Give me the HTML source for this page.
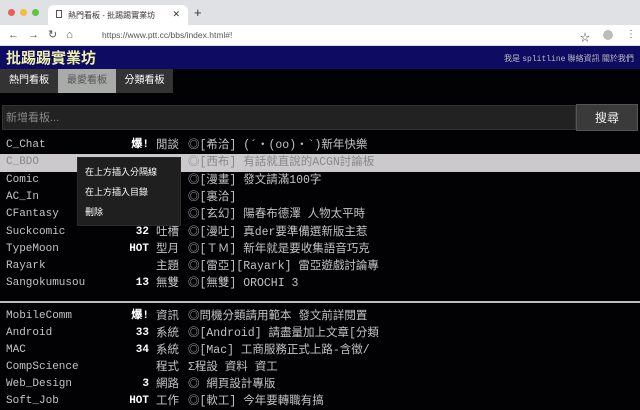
<!DOCTYPE html>
<html><head><meta charset="utf-8"><style>
*{margin:0;padding:0;box-sizing:border-box}
body{width:640px;height:400px;overflow:hidden;background:#020103;font-family:"Liberation Sans","Noto Sans CJK TC",sans-serif;position:relative}
.abs{position:absolute}
.tabbar{left:0;top:0;width:640px;height:25px;background:#dfe1e5}
.tab{left:48px;top:5px;width:140px;height:20px;background:#fff;border-radius:6px 6px 0 0;font-size:8px;color:#333;padding:5px 0 0 20px}
.addr{left:0;top:25px;width:640px;height:21px;background:#fff;border-bottom:1px solid #ddd}
.hdr{left:0;top:46px;width:640px;height:23px;background:#0d0b62}
.row{position:absolute;left:0;width:640px;height:17px;font-size:11px;line-height:17px;color:#c4c4c4}
.n{position:absolute;left:6px;font-family:"Liberation Mono","Noto Sans CJK TC",monospace;font-size:11px}
.c{position:absolute;right:491px;color:#fff;font-weight:bold;font-family:"Liberation Mono",monospace}
.k{position:absolute;left:156px;font-size:11.5px}
.t{position:absolute;left:188px;white-space:nowrap;font-family:"Liberation Mono","Noto Sans CJK TC",monospace;font-size:11.5px}
.menu div{position:absolute;left:7px;font-size:9px;color:#fff}
</style></head><body>
<div class="abs tabbar"></div>
<div class="abs" style="left:8px;top:9px;width:7px;height:7px;border-radius:50%;background:#ee5c55"></div>
<div class="abs" style="left:20px;top:9px;width:7px;height:7px;border-radius:50%;background:#f4bd3a"></div>
<div class="abs" style="left:32px;top:9px;width:7px;height:7px;border-radius:50%;background:#5bc545"></div>
<div class="abs tab">熱門看板 - 批踢踢實業坊<span style="position:absolute;right:8px;top:4px;font-size:9px">✕</span></div>
<div class="abs" style="left:56px;top:10px;width:6px;height:8px;border:1px solid #555"></div>
<div class="abs" style="left:194px;top:5px;font-size:13px;color:#333">+</div>
<div class="abs addr"></div>
<div class="abs" style="left:8px;top:28px;font-size:11px;color:#555;letter-spacing:9px">←→↻⌂</div>
<div class="abs" style="left:102px;top:30px;font-size:8.5px;color:#555">https://www.ptt.cc/bbs/index.html#!</div>
<div class="abs" style="left:580px;top:29px;font-size:10px;color:#444">☆</div>
<div class="abs" style="left:603px;top:30px;width:10px;height:10px;border-radius:50%;background:#bbb"></div>
<div class="abs" style="left:626px;top:29px;font-size:10px;color:#555">⋮</div>
<div class="abs hdr"></div>
<div class="abs" style="left:6px;top:47px;font-size:15px;font-weight:bold;color:#f0f0a8">批踢踢實業坊</div>
<div class="abs" style="left:504px;top:53px;font-size:8px;color:#bbb">我是 <span style="font-family:'Liberation Mono',monospace">splitline</span> 聯絡資訊 關於我們</div>
<div class="abs" style="left:0;top:69px;width:58px;height:24px;background:#333;color:#fff;font-size:10px;line-height:24px;text-align:center">熱門看板</div>
<div class="abs" style="left:58px;top:69px;width:58px;height:24px;background:#a9aba8;color:#555;font-size:10px;line-height:24px;text-align:center">最愛看板</div>
<div class="abs" style="left:116px;top:69px;width:57px;height:24px;background:#333;color:#fff;font-size:10px;line-height:24px;text-align:center">分類看板</div>
<div class="abs" style="left:2px;top:105px;width:574px;height:25px;background:#222;border:1px solid #333;color:#888;font-size:11px;line-height:24px;padding-left:3px">新增看板...</div>
<div class="abs" style="left:576px;top:104px;width:62px;height:27px;background:#3a3a3a;border:1px solid #555;color:#eee;font-size:12px;line-height:26px;text-align:center">搜尋</div>

<div class="row" style="top:137px"><span class="n">C_Chat</span><span class="c">爆!</span><span class="k">閒談</span><span class="t">◎[希洽] (´・(oo)・`)新年快樂</span></div>
<div class="row" style="top:154px;height:18px;background:#cbc9cc;color:#888"><span class="n">C_BDO</span><span class="t">◎[西布] 有話就直說的ACGN討論板</span></div>
<div class="row" style="top:172px"><span class="n">Comic</span><span class="t">◎[漫畫] 發文請滿100字</span></div>
<div class="row" style="top:189px"><span class="n">AC_In</span><span class="t">◎[裏洽]</span></div>
<div class="row" style="top:206px"><span class="n">CFantasy</span><span class="t">◎[玄幻] 陽春布德澤 人物太平時</span></div>
<div class="row" style="top:224px"><span class="n">Suckcomic</span><span class="c">32</span><span class="k">吐槽</span><span class="t">◎[漫吐] 真der要準備選新版主惹</span></div>
<div class="row" style="top:241px"><span class="n">TypeMoon</span><span class="c">HOT</span><span class="k">型月</span><span class="t">◎[ＴＭ] 新年就是要收集語音巧克</span></div>
<div class="row" style="top:258px"><span class="n">Rayark</span><span class="k">主題</span><span class="t">◎[雷亞][Rayark] 雷亞遊戲討論專</span></div>
<div class="row" style="top:275px"><span class="n">Sangokumusou</span><span class="c">13</span><span class="k">無雙</span><span class="t">◎[無雙] OROCHI 3</span></div>
<div class="abs" style="left:0;top:301px;width:640px;height:2px;background:#bbb"></div>
<div class="row" style="top:308px"><span class="n">MobileComm</span><span class="c">爆!</span><span class="k">資訊</span><span class="t">◎問機分類請用範本 發文前詳閱置</span></div>
<div class="row" style="top:325px"><span class="n">Android</span><span class="c">33</span><span class="k">系統</span><span class="t">◎[Android] 請盡量加上文章[分類</span></div>
<div class="row" style="top:342px"><span class="n">MAC</span><span class="c">34</span><span class="k">系統</span><span class="t">◎[Mac] 工商服務正式上路-含徵/</span></div>
<div class="row" style="top:359px"><span class="n">CompScience</span><span class="k">程式</span><span class="t">Σ程設 資料 資工</span></div>
<div class="row" style="top:376px"><span class="n">Web_Design</span><span class="c">3</span><span class="k">網路</span><span class="t">◎ 網頁設計專版</span></div>
<div class="row" style="top:393px"><span class="n">Soft_Job</span><span class="c">HOT</span><span class="k">工作</span><span class="t">◎[軟工] 今年要轉職有搞</span></div>

<div class="abs menu" style="left:77px;top:157px;width:104px;height:69px;background:#1f1f1f;border:1px solid #2a2a2a">
<div style="top:7px">在上方插入分隔線</div>
<div style="top:27px">在上方插入目錄</div>
<div style="top:47px">刪除</div>
</div>
</body></html>
